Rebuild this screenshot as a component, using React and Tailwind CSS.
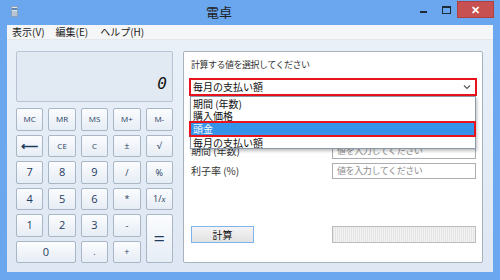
import React from "react"

const jp = { fontFamily: '"Noto Sans CJK JP", "Noto Sans", sans-serif' }
const ui = { fontFamily: '"Open Sans", "Noto Sans", sans-serif' }

const keys = [
  { t: "MC", s: "text-[8px]" },
  { t: "MR", s: "text-[8px]" },
  { t: "MS", s: "text-[8px]" },
  { t: "M+", s: "text-[8px]" },
  { t: "M-", s: "text-[8px]" },
  { t: "⟵", s: "text-[12px] font-bold" },
  { t: "CE", s: "text-[8px]" },
  { t: "C", s: "text-[8px]" },
  { t: "±", s: "text-[9px]" },
  { t: "√", s: "text-[9px]" },
  { t: "7" }, { t: "8" }, { t: "9" },
  { t: "/", s: "text-[9px]" },
  { t: "%", s: "text-[9px]" },
  { t: "4" }, { t: "5" }, { t: "6" },
  { t: "*", s: "text-[9px]" },
  { t: "1/x", s: "text-[9px]", x: true },
  { t: "1" }, { t: "2" }, { t: "3" },
  { t: "-", s: "text-[9px]" },
  { t: "=", s: "text-[20px]", c: "row-span-2" },
  { t: "0", c: "col-span-2" },
  { t: ".", s: "text-[9px]" },
  { t: "+", s: "text-[9px]" },
]

function Key({ k }) {
  return (
    <div
      className={`flex items-center justify-center rounded-[2px] border border-[#a9b6c5] bg-gradient-to-b from-[#fbfcfe] to-[#e6edf5] text-[#1f3b5e] ${k.s || "text-[11px]"} ${k.c || ""}`}
      style={ui}
    >
      {k.x ? (
        <span>
          1/<i style={{ fontFamily: '"Liberation Serif", serif' }}>x</i>
        </span>
      ) : (
        k.t
      )}
    </div>
  )
}

function FieldRow({ label }) {
  return (
    <div className="flex items-center h-[16px]">
      <div className="w-[141px] text-[10px] text-[#333] leading-none">{label}</div>
      <div className="w-[144px] h-[16px] border border-[#abadb3] bg-white flex items-center pl-[4px] text-[9px] text-[#8d8d8d] tracking-[-0.4px]">
        値を入力してください
      </div>
    </div>
  )
}

export default function App() {
  return (
    <div className="w-[500px] h-[280px] bg-[#6aa7ee] flex flex-col overflow-hidden" style={jp}>
      {/* title bar */}
      <div className="h-[25px] flex items-start relative">
        <div className="ml-[11px] mt-[6px] w-[7px] h-[11px] bg-[#dfe7ef] border border-[#8fa3b8] flex flex-col items-center pt-[1px] gap-[1px]">
          <div className="w-[5px] h-[2px] bg-[#5f88b5]" />
          <div className="w-[5px] h-[5px] bg-[#b8c6d4]" />
        </div>
        <div className="flex-1 text-center text-[13px] text-[#222] mt-[3px] leading-[18px]">電卓</div>
        <div className="w-[7px] h-[2px] bg-[#1e2a38] mt-[11px]" />
        <div className="ml-[15px] mt-[6px] w-[9px] h-[8px] border border-[#1e2a38] border-t-2" />
        <div className="ml-[6px] mr-[6px] w-[37px] h-[17px] mt-[1px] bg-[#c75050] border border-[#b04040] flex items-center justify-center text-white text-[11px] font-bold leading-none" style={ui}>
          ✕
        </div>
      </div>

      {/* body */}
      <div className="mx-[7px] h-[247px] flex flex-col">
        <div className="h-[15px] bg-[#f5f6f7] border-b border-[#e3e8ee] flex items-center text-[10px] text-[#1a1a1a] leading-none">
          <span className="ml-[5px]">表示(V)</span>
          <span className="ml-[11px]">編集(E)</span>
          <span className="ml-[12px]">ヘルプ(H)</span>
        </div>
        <div className="flex-1 bg-gradient-to-b from-[#e9f0f8] to-[#dee7f3] flex pl-[9px] pt-[11px]">
          {/* calculator */}
          <div className="w-[157px] flex flex-col">
            <div className="h-[51px] rounded-[2px] border border-[#b7c4d3] bg-[#e1e9f2] flex items-end justify-end pr-[5px] pb-[9px]">
              <span className="text-[16px] leading-none italic text-[#111]" style={{ fontFamily: '"DejaVu Sans Mono", monospace' }}>
                0
              </span>
            </div>
            <div className="mt-[6px] grid grid-cols-5 auto-rows-[22.5px] gap-x-[5px] gap-y-[4px]">
              {keys.map((k, i) => (
                <Key key={i} k={k} />
              ))}
            </div>
          </div>

          {/* mortgage panel */}
          <div className="ml-[10px] w-[300px] h-[212px] rounded-[2px] border border-[#a7b2bf] bg-white relative pl-[7px]">
            <div className="mt-[7px] text-[9px] text-[#333] tracking-[-0.5px] leading-[12px]">計算する値を選択してください</div>
            <div className="mt-[7px] ml-[-2px] w-[288px] h-[18px] border-2 border-[#e8131c] flex items-center justify-between pl-[2px] pr-[4px]">
              <span className="text-[10px] text-[#111] leading-none">毎月の支払い額</span>
              <svg width="8" height="6" viewBox="0 0 8 6">
                <path d="M1 1.5 L4 4.5 L7 1.5" fill="none" stroke="#555" strokeWidth="1.2" />
              </svg>
            </div>
            <div className="mt-[7px] flex flex-col gap-[4px]">
              <FieldRow label="購入価格" />
              <FieldRow label="頭金" />
              <FieldRow label="期間 (年数)" />
              <FieldRow label="利子率 (%)" />
            </div>
            <div className="mt-[47px] flex items-center">
              <div className="w-[63px] h-[17px] border border-[#7eb4ea] bg-gradient-to-b from-[#f4f4f4] to-[#e2e2e2] flex items-center justify-center text-[10px] text-[#111] leading-none">
                計算
              </div>
              <div className="ml-[78px] w-[144px] h-[17px] border border-[#bcbcbc] bg-[repeating-linear-gradient(90deg,#e4e4e4_0px,#e4e4e4_1px,#f3f3f3_1px,#f3f3f3_2px)]" />
            </div>

            {/* open dropdown list */}
            <div className="absolute left-[6px] top-[44px] w-[286px] border border-[#8a9aab] bg-white shadow-[1px_2px_3px_rgba(0,0,0,0.25)] flex flex-col text-[10px] text-[#111] leading-none">
              <div className="h-[12px] flex items-center pl-[2px] mt-[1px]">期間 (年数)</div>
              <div className="h-[11px] flex items-center pl-[2px]">購入価格</div>
              <div className="h-[16px] ml-[-2px] mr-[-1px] border-2 border-[#e8131c] bg-[#3593ea] flex items-center pl-[2px] text-white">頭金</div>
              <div className="h-[11px] flex items-center pl-[2px]">毎月の支払い額</div>
            </div>
          </div>
        </div>
      </div>
    </div>
  )
}
